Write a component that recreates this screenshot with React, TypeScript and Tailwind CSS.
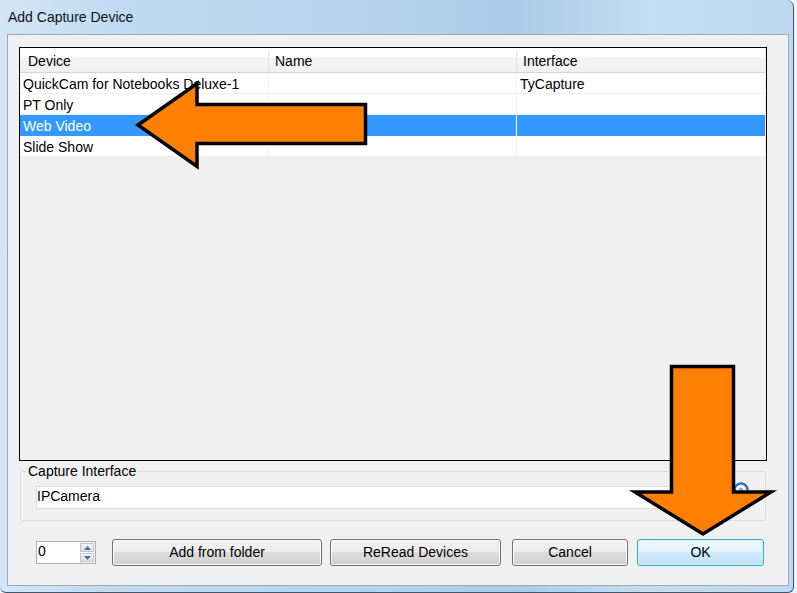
import React from 'react'

interface Row {
  device: string
  name: string
  iface: string
  selected?: boolean
}

const rows: Row[] = [
  { device: 'QuickCam for Notebooks Deluxe-1', name: '', iface: 'TyCapture' },
  { device: 'PT Only', name: '', iface: '' },
  { device: 'Web Video', name: '', iface: '', selected: true },
  { device: 'Slide Show', name: '', iface: '' },
]

const btn =
  'h-[27px] rounded-[3px] border border-[#707070] shadow-[inset_0_0_0_1px_#fbfbfb] bg-[linear-gradient(180deg,#f2f2f2_0%,#ebebeb_50%,#dddddd_50%,#cfcfcf_100%)] text-center leading-[25px] text-black'

const Triangle = ({ up }: { up: boolean }) => (
  <svg width="7" height="4" viewBox="0 0 7 4">
    <polygon points={up ? '3.5,0 7,4 0,4' : '0,0 7,0 3.5,4'} fill="#4a68a8" />
  </svg>
)

const Spinner: React.FC = () => {
  return (
    <div className="mt-[2px] ml-[28px] flex h-[23px] w-[60px] border border-[#a9acb2] bg-white">
      <div className="flex-1 pl-[1px] leading-[19px]">0</div>
      <div className="mr-[1px] flex w-[14px] flex-col gap-[1px] pt-[1px]">
        <div className="flex h-[9px] items-center justify-center border border-[#c2c6cc] bg-[linear-gradient(180deg,#f4f4f4,#dcdfe4)]">
          <Triangle up />
        </div>
        <div className="flex h-[9px] items-center justify-center border border-[#c2c6cc] bg-[linear-gradient(180deg,#f4f4f4,#dcdfe4)]">
          <Triangle up={false} />
        </div>
      </div>
    </div>
  )
}

export default function App() {
  return (
    <div className="relative h-[593px] w-[797px] overflow-hidden bg-[#eef3f7] font-['Liberation_Sans',Arial,sans-serif] text-[14px] text-black">
      <div className="flex h-[593px] w-[794px] flex-col rounded-tr-[7px] rounded-b-[6px] border-r border-b border-[#42566b] bg-[linear-gradient(90deg,#d3e6f6_0%,#bfdaf1_15%,#b6d4ee_45%,#a9cbe8_65%,#c4def3_82%,#bcd8f0_100%)]">
        {/* title bar */}
        <div className="h-[34px] pl-[8px] leading-[34px] text-[#111]">Add Capture Device</div>

        {/* client area */}
        <div className="ml-[7px] flex h-[552px] w-[782px] flex-col border border-[#9aabbd] bg-[#f0f0f0]">
          {/* list view */}
          <div className="mt-[12px] ml-[11px] h-[414px] w-[748px] border border-black bg-[#f0f0f0]">
            <div className="flex h-[25px] w-[745px] border-b border-[#d5d5d5] bg-[linear-gradient(180deg,#ffffff_0%,#ffffff_35%,#f3f4f6_42%,#eef0f2_100%)] pt-[2px] leading-[22px]">
              <div className="w-[249px] border-r border-[#e3e4e6] pl-[8px]">Device</div>
              <div className="w-[248px] border-r border-[#e3e4e6] pl-[6px]">Name</div>
              <div className="w-[248px] pl-[6px]">Interface</div>
            </div>
            {rows.map((r) => (
              <div
                key={r.device}
                className={
                  r.selected
                    ? 'flex h-[21px] w-[745px] bg-[#3399ff] leading-[16px] text-white'
                    : 'flex h-[21px] w-[745px] border-b border-[#f0f0f0] bg-white leading-[16px]'
                }
              >
                <div className={r.selected ? 'w-[249px] border-r border-white pt-[3px] pl-[3px]' : 'w-[249px] border-r border-[#f0f0f0] pt-[3px] pl-[3px]'}>{r.device}</div>
                <div className={r.selected ? 'w-[248px] border-r border-white pt-[3px] pl-[3px]' : 'w-[248px] border-r border-[#f0f0f0] pt-[3px] pl-[3px]'}>{r.name}</div>
                <div className="w-[248px] pt-[3px] pl-[3px]">{r.iface}</div>
              </div>
            ))}
          </div>

          {/* capture interface group */}
          <fieldset className="relative mt-[3px] ml-[12px] w-[746px] rounded-[3px] border border-[#d5dfe5] pb-[11px]">
            <legend className="ml-[5px] px-[2px] leading-[15px]">Capture Interface</legend>
            <div className="mt-[7px] ml-[15px] h-[23px] w-[713px] border border-[#d8dfe6] bg-white leading-[19px]">IPCamera</div>
            <svg className="absolute top-[3px] left-[712px]" width="16" height="16" viewBox="0 0 16 16">
              <circle cx="8" cy="8" r="6.5" fill="#ffffff" stroke="#3d6fc4" strokeWidth="2.5" />
              <circle cx="8" cy="8" r="2.5" fill="#8fb3e8" />
            </svg>
          </fieldset>

          {/* bottom buttons */}
          <div className="mt-[18px] flex h-[27px] items-start">
            <Spinner />
            <button className={`ml-[16px] w-[210px] ${btn}`}>Add from folder</button>
            <button className={`ml-[8px] w-[171px] ${btn}`}>ReRead Devices</button>
            <button className={`ml-[11px] w-[116px] ${btn}`}>Cancel</button>
            <button className="ml-[9px] h-[27px] w-[127px] rounded-[3px] border border-[#3ca6dc] bg-[linear-gradient(180deg,#eef8fd_0%,#e2f3fc_50%,#cfeaf9_50%,#bde2f5_100%)] text-center leading-[25px] text-black shadow-[inset_0_0_0_1px_#d6f0fc]">
              OK
            </button>
          </div>
        </div>
      </div>

      {/* annotation arrows */}
      <svg className="pointer-events-none absolute top-0 left-0" width="797" height="593" viewBox="0 0 797 593">
        <polygon
          points="138,125 197,83.5 197,104.5 365.5,104.5 365.5,143.5 197,143.5 197,166.5"
          fill="#ff8000"
          stroke="#000"
          strokeWidth="3.5"
          strokeLinejoin="miter"
        />
        <polygon
          points="671.5,366.5 733.5,366.5 733.5,492 771,492 703,534 635,492 671.5,492"
          fill="#ff8000"
          stroke="#000"
          strokeWidth="3.5"
          strokeLinejoin="miter"
        />
      </svg>
    </div>
  )
}
